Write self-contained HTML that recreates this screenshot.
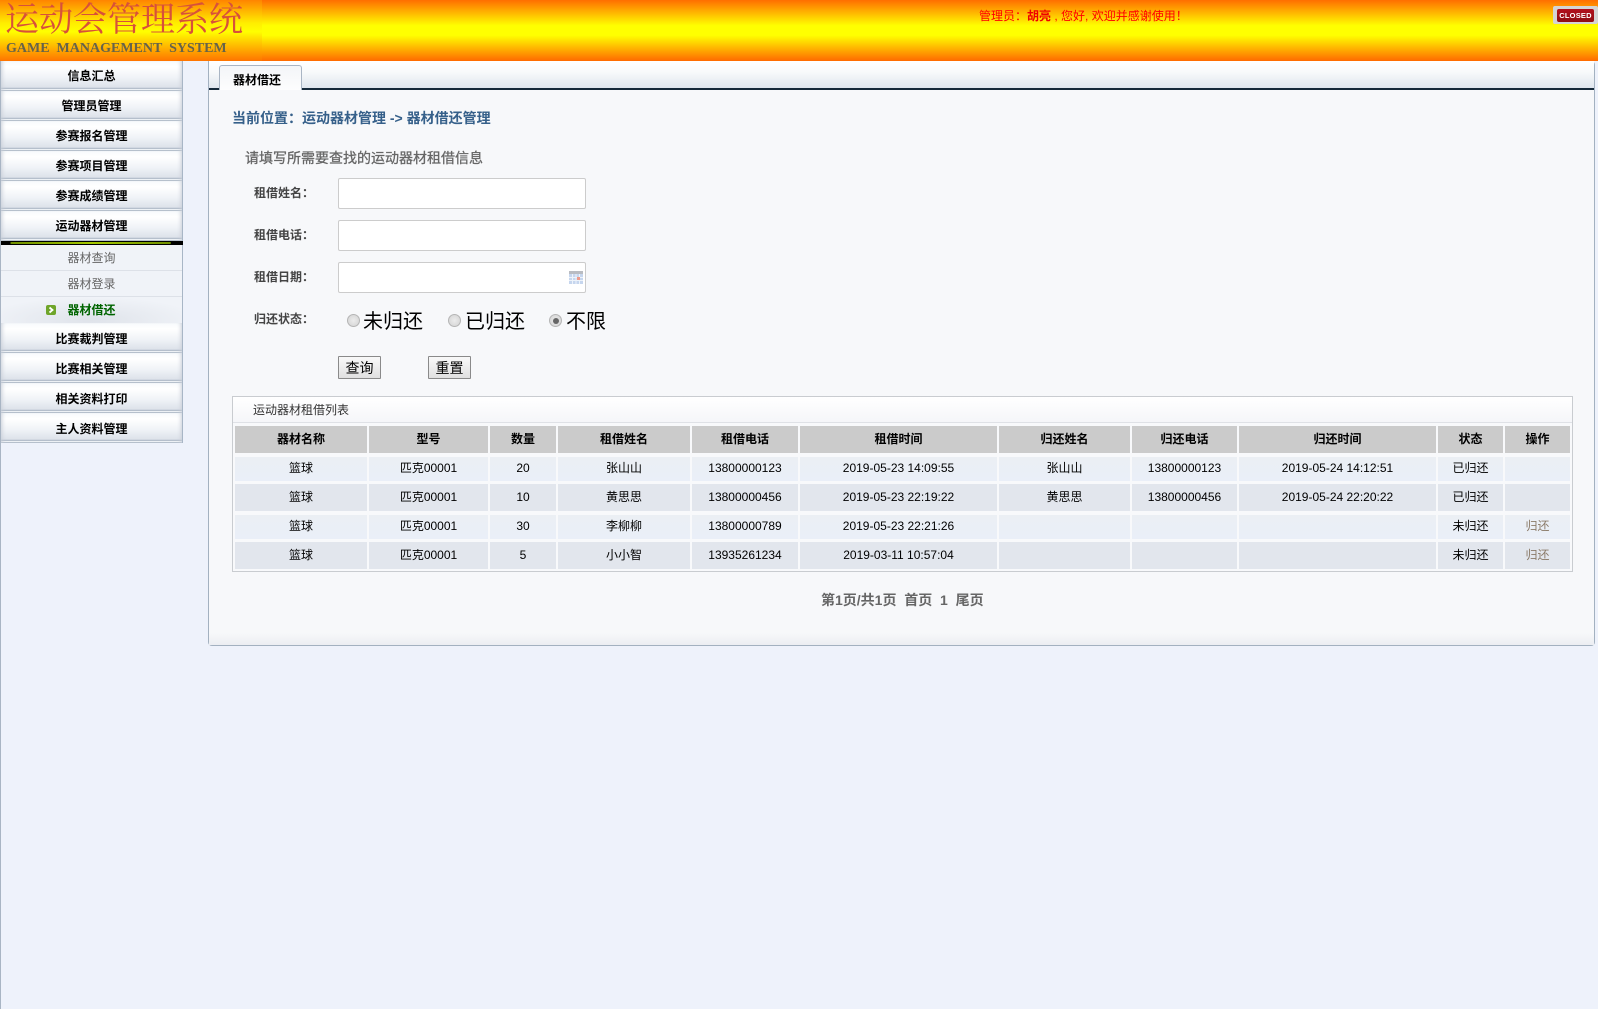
<!DOCTYPE html>
<html lang="zh-CN"><head><meta charset="utf-8"><title>运动会管理系统</title>
<style>
*{box-sizing:border-box}
html,body{margin:0;padding:0}
body{width:1598px;height:1009px;position:relative;overflow:hidden;background:#eef2fb;font:12px/16px "Liberation Sans","Noto Sans CJK SC",sans-serif;color:#000}
.a{position:absolute;white-space:nowrap}
#hd{left:0;top:0;width:1598px;height:61px;background:linear-gradient(#ff6e00 0,#ff0 42%,#ff0 58%,#ff6a00 100%)}
#lg{left:0;top:0;width:262px;height:61px;background:linear-gradient(#ff8400 0,#ffee00 38%,#ff0 52%,#ffe000 62%,#ff7400 100%)}
#t1{left:5px;top:-3px;font:34px/40px "Noto Serif CJK SC","Liberation Serif",serif;color:#d8503a}
#t2{left:6px;top:41px;font:bold 14px/16px "Liberation Serif",serif;color:#66634a;white-space:pre}
#wl{left:979px;top:8px;color:#f00;font-size:12px;line-height:16px}
#cl{left:1553px;top:6px;width:45px;height:18px;background:#d4d4d4;border-radius:2px}
#cl b{position:absolute;left:4px;top:3px;width:37px;height:13px;background:linear-gradient(#b3101c,#8e0d12);border-radius:2px;color:#fff;font:bold 7.5px/13px "Liberation Sans",sans-serif;text-align:center;letter-spacing:.2px}
#lb{left:0;top:61px;width:1px;height:948px;background:#a9b5c4}
.m{position:absolute;left:1px;width:182px;height:30px;background:linear-gradient(#f8fafc 0,#fff 20%,#f0f3f7 55%,#dde2ea 88%,#b5bfcc 90%,#b5bfcc 93%,#eef1f5 93%,#eef1f5 97%,#b5bfcc 97%);border-right:1px solid #a8b6c6;box-shadow:inset 4px 0 4px -3px #c8ced8,inset -4px 0 4px -3px #c8ced8;text-align:center;font-weight:bold;line-height:30px;color:#000}
.m.d{line-height:32px}
#bar{left:1px;top:241px;width:182px;height:4px;background:linear-gradient(90deg,#000 0,#000 5%,#6f8f00 5.5%,#a4c800 50%,#6f8f00 93%,#000 93.5%);border-top:1px solid #000;border-bottom:1px solid #000}
#sub{left:1px;top:245px;width:182px;height:78px;background:#f0f3f8;border-right:1px solid #a8b6c6}
.s{position:absolute;left:1px;width:181px;height:26px;text-align:center;line-height:27px;color:#666;border-bottom:1px solid #dde1e8}
#p{left:208px;top:61px;width:1387px;height:585px;background:#f7f8fa;border:1px solid #a3b1c0;border-top:0;border-radius:0 4px 4px 4px}
#pt{left:0;top:0;width:1385px;height:27px;background:linear-gradient(#fff 0,#f8fafb 40%,#e0e6ee 100%)}
#pl{left:0;top:27px;width:1385px;height:2px;background:#16293a}
#pb{left:0;top:572px;width:1385px;height:12px;background:linear-gradient(#f7f8fa,#eceef2)}
#tab{left:219px;top:65px;width:83px;height:25px;background:linear-gradient(#f3f5f8,#fdfdfe);border:1px solid #a9b5c4;border-bottom:0;border-radius:3px 3px 0 0;padding-left:13px;font-weight:bold;line-height:28px}
#loc{left:232px;top:108px;font-size:14px;line-height:20px;font-weight:bold;color:#36608a}
#tip{left:245px;top:148px;font-size:14px;line-height:20px;color:#666;-webkit-text-stroke:.3px #666}
.l{font-weight:bold;color:#444;left:254px;font-size:12px;line-height:16px}
.i{position:absolute;left:338px;width:248px;height:31px;background:#fff;border:1px solid #ccc;border-radius:2px}
.r{position:absolute;width:13px;height:13px;border-radius:50%;border:1px solid #b5b5b5;background:radial-gradient(#ececec,#d2d2d2)}
.r i{position:absolute;left:2.5px;top:2.5px;width:6px;height:6px;border-radius:50%;background:#666}
.rt{font-size:20px;line-height:24px;color:#000;top:310px}
.b{position:absolute;top:356px;width:43px;height:23px;background:linear-gradient(#f9f9f9,#e0e0e0);border:1px solid #8a8a8a;border-radius:1px;text-align:center;font-size:14px;line-height:23px;color:#000}
#tb{left:232px;top:396px;width:1341px;height:176px;background:#f8f9fb;border:1px solid #c9ccd0}
#tt{left:0;top:0;width:1339px;height:26px;background:linear-gradient(#fff,#f5f6f9);border-bottom:1px solid #dfe1e6;padding-left:20px;line-height:27px;color:#333}
.g{position:absolute;left:235px;width:1335px;display:grid;grid-template-columns:132px 119px 66px 132px 106px 197px 131px 105px 197px 65px 65px;column-gap:2px;text-align:center}
.g div{height:100%}
.h div{background:#cbcbcb;font-weight:bold;line-height:27px}
.o div{background:linear-gradient(#ebeff4,#eaeff8);line-height:22px}
.e div{background:#e2e6ed;line-height:27px}
.k{color:#8a7a68}
#pg{left:821px;top:590px;font-size:14px;line-height:20px;font-weight:bold;color:#666;white-space:pre}
</style></head>
<body>
<div class="a" id="hd"></div><div class="a" id="lg"></div>
<div class="a" id="t1">运动会管理系统</div>
<div class="a" id="t2">GAME  MANAGEMENT  SYSTEM</div>
<div class="a" id="wl">管理员：<b style="font-weight:bold;color:#e00">胡亮</b> , 您好, 欢迎并感谢使用！</div>
<div class="a" id="cl"><b>CLOSED</b></div>
<div class="a" id="lb"></div>

<div class="m" style="top:61px">信息汇总</div>
<div class="m" style="top:91px">管理员管理</div>
<div class="m" style="top:121px">参赛报名管理</div>
<div class="m" style="top:151px">参赛项目管理</div>
<div class="m" style="top:181px">参赛成绩管理</div>
<div class="m" style="top:211px">运动器材管理</div>
<div class="a" id="bar"></div>
<div class="a" id="sub"></div>
<div class="s" style="top:245px">器材查询</div>
<div class="s" style="top:271px">器材登录</div>
<div class="s" style="top:297px;height:26px;border:0;font-weight:bold;color:#006400;background:radial-gradient(ellipse 60% 90% at 50% 90%,#dfe3ea,#f0f3f8)">器材借还</div>
<svg class="a" style="left:46px;top:305px" width="10" height="10" viewBox="0 0 10 10"><rect width="10" height="10" rx="2" fill="#6fa52a"/><path d="M3.5 2.5L6.5 5L3.5 7.5" fill="none" stroke="#fff" stroke-width="1.8"/></svg>
<div class="m d" style="top:323px">比赛裁判管理</div>
<div class="m d" style="top:353px">比赛相关管理</div>
<div class="m d" style="top:383px">相关资料打印</div>
<div class="m d" style="top:413px">主人资料管理</div>

<div class="a" id="p">
<div class="a" id="pt"></div><div class="a" id="pl"></div><div class="a" id="pb"></div>
</div>
<div class="a" id="tab">器材借还</div>
<div class="a" id="loc">当前位置：运动器材管理 -&gt; 器材借还管理</div>
<div class="a" id="tip">请填写所需要查找的运动器材租借信息</div>
<div class="a l" style="top:185px">租借姓名：</div>
<div class="a l" style="top:227px">租借电话：</div>
<div class="a l" style="top:269px">租借日期：</div>
<div class="a l" style="top:311px">归还状态：</div>
<div class="i" style="top:178px"></div>
<div class="i" style="top:220px"></div>
<div class="i" style="top:262px"></div>
<svg class="a" style="left:569px;top:271px" width="14" height="13" viewBox="0 0 14 13"><rect width="14" height="3" fill="#b9bcc2"/><rect y="3" width="14" height="10" fill="#c6d6ee"/><path d="M0 6.5H14M0 9.5H14M3.5 3V13M7 3V13M10.5 3V13" stroke="#eef3fa" stroke-width="1"/><rect x="8" y="6" width="3" height="3" fill="#ee9a8c"/></svg>
<div class="r" style="left:347px;top:314px"></div><div class="a rt" style="left:363px">未归还</div>
<div class="r" style="left:448px;top:314px"></div><div class="a rt" style="left:465px">已归还</div>
<div class="r" style="left:549px;top:314px"><i></i></div><div class="a rt" style="left:566px">不限</div>
<div class="b" style="left:338px">查询</div>
<div class="b" style="left:428px">重置</div>

<div class="a" id="tb"><div class="a" id="tt">运动器材租借列表</div></div>
<div class="g h" style="top:426px;height:27px"><div>器材名称</div><div>型号</div><div>数量</div><div>租借姓名</div><div>租借电话</div><div>租借时间</div><div>归还姓名</div><div>归还电话</div><div>归还时间</div><div>状态</div><div>操作</div></div>
<div class="g o" style="top:457px;height:24px"><div>篮球</div><div>匹克00001</div><div>20</div><div>张山山</div><div>13800000123</div><div>2019-05-23 14:09:55</div><div>张山山</div><div>13800000123</div><div>2019-05-24 14:12:51</div><div>已归还</div><div></div></div>
<div class="g e" style="top:484px;height:27px"><div>篮球</div><div>匹克00001</div><div>10</div><div>黄思思</div><div>13800000456</div><div>2019-05-23 22:19:22</div><div>黄思思</div><div>13800000456</div><div>2019-05-24 22:20:22</div><div>已归还</div><div></div></div>
<div class="g o" style="top:515px;height:24px"><div>篮球</div><div>匹克00001</div><div>30</div><div>李柳柳</div><div>13800000789</div><div>2019-05-23 22:21:26</div><div></div><div></div><div></div><div>未归还</div><div class="k">归还</div></div>
<div class="g e" style="top:542px;height:27px"><div>篮球</div><div>匹克00001</div><div>5</div><div>小小智</div><div>13935261234</div><div>2019-03-11 10:57:04</div><div></div><div></div><div></div><div>未归还</div><div class="k">归还</div></div>
<div class="a" id="pg">第1页/共1页  首页  1  尾页</div>
</body></html>
